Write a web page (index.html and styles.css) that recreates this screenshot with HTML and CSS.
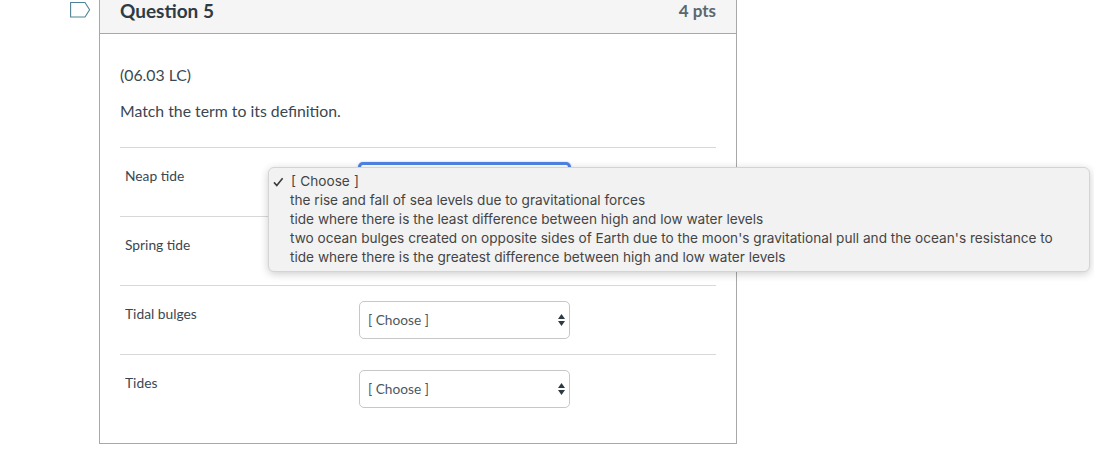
FILE: index.html
```html
<!DOCTYPE html>
<html lang="en">
<head>
<meta charset="utf-8">
<title>Question 5</title>
<link rel="stylesheet" href="styles.css">
</head>
<body>
<main class="page">
  <svg class="flag" width="21" height="17" viewBox="0 0 21 17" aria-hidden="true">
    <path d="M.6 1.5H15L19.6 8.8L15 16H.6Z" fill="none" stroke="#4f8299" stroke-width="1.1"/>
  </svg>
  <section class="card">
    <header class="card-head">
      <h2 class="title">Question 5</h2>
      <span class="pts">4 pts</span>
    </header>
    <div class="card-body">
      <p class="code">(06.03 LC)</p>
      <p class="prompt">Match the term to its definition.</p>
      <div class="rows">
        <div class="row">
          <span class="term">Neap tide</span>
          <div class="select focused"></div>
        </div>
        <div class="row">
          <span class="term">Spring tide</span>
          <div class="select"></div>
        </div>
        <div class="row">
          <span class="term">Tidal bulges</span>
          <div class="select"><span>[ Choose ]</span>
            <svg class="caret" width="7" height="14" viewBox="0 0 7 14" aria-hidden="true"><path d="M3.5 1L7 6H0ZM3.5 13L0 8H7Z" fill="#2d3b45"/></svg>
          </div>
        </div>
        <div class="row">
          <span class="term">Tides</span>
          <div class="select"><span>[ Choose ]</span>
            <svg class="caret" width="7" height="14" viewBox="0 0 7 14" aria-hidden="true"><path d="M3.5 1L7 6H0ZM3.5 13L0 8H7Z" fill="#2d3b45"/></svg>
          </div>
        </div>
      </div>
    </div>
  </section>
</main>
<ul class="menu">
  <li class="opt first">
    <svg class="check" width="11" height="10" viewBox="0 0 11 10" aria-hidden="true"><path d="M1 5.4L3.8 8.6L9.6 1.2" fill="none" stroke="#3c3c3c" stroke-width="1.6"/></svg>
    [ Choose ]
  </li>
  <li class="opt">the rise and fall of sea levels due to gravitational forces</li>
  <li class="opt">tide where there is the least difference between high and low water levels</li>
  <li class="opt">two ocean bulges created on opposite sides of Earth due to the moon's gravitational pull and the ocean's resistance to</li>
  <li class="opt">tide where there is the greatest difference between high and low water levels</li>
</ul>
</body>
</html>
```
FILE: styles.css
```css
html, body {
  margin: 0;
  padding: 0;
  height: 100%;
  overflow: hidden;
  background: #fff;
}
body {
  font-family: Lato, "Liberation Sans", sans-serif;
  color: #3a4750;
}
.page {
  display: flex;
  align-items: flex-start;
  padding-left: 70px;
}
.flag {
  flex: none;
  margin-top: 1px;
  margin-right: 8px;
}
.card {
  width: 636px;
  height: 443px;
  border: 1px solid #a8a8a8;
  border-top: 0;
  display: flex;
  flex-direction: column;
}
.card-head {
  height: 34px;
  box-sizing: border-box;
  padding: 0 20px 11px;
  display: flex;
  justify-content: space-between;
  align-items: center;
  background: #f5f5f5;
  border-bottom: 1px solid #a8a8a8;
}
.title {
  margin: 0;
  font-size: 19px;
  font-weight: 700;
  line-height: 22px;
  color: #2d3b45;
}
.pts {
  font-size: 17px;
  font-weight: 700;
  color: #5b6770;
  line-height: 22px;
}
.card-body {
  padding: 0 20px;
}
.code {
  margin: 30px 0 0;
  font-size: 15.8px;
  line-height: 22px;
}
.prompt {
  margin: 14px 0 0;
  font-size: 15.8px;
  line-height: 22px;
}
.rows {
  margin-top: 25px;
}
.row {
  height: 69px;
  box-sizing: border-box;
  border-top: 1px solid #d8d8d8;
  display: flex;
  align-items: flex-start;
}
.term {
  width: 239px;
  padding-left: 5px;
  box-sizing: border-box;
  margin-top: 18px;
  font-size: 13.8px;
  line-height: 19px;
}
.select {
  position: relative;
  width: 211px;
  height: 38px;
  margin-top: 15px;
  box-sizing: border-box;
  border: 1px solid #c7c7c7;
  border-radius: 5px;
  background: #fff;
  padding: 0 0 2px 8px;
  display: flex;
  align-items: center;
  font-size: 13.7px;
  color: #4b5860;
}
.select.focused {
  border: 3px solid #4f82e2;
  margin-top: 14px;
  margin-left: -1px;
  width: 213px;
  height: 40px;
  box-shadow: 0 0 2px rgba(79, 130, 226, 0.5);
}
.caret {
  position: absolute;
  right: 4px;
  top: 11px;
}
.menu {
  position: absolute;
  left: 268px;
  top: 167px;
  width: 822px;
  height: 105px;
  box-sizing: border-box;
  margin: 0;
  padding: 4px 0 0 21px;
  list-style: none;
  background: #f2f2f2;
  border: 1px solid #d4d4d4;
  border-radius: 6px;
  box-shadow: 0 2px 8px rgba(0, 0, 0, 0.2);
  font-family: Inter, "Liberation Sans", sans-serif;
  font-size: 13.64px;
  line-height: 19px;
  color: #444;
}
.opt {
  position: relative;
  white-space: nowrap;
}
.first {
  word-spacing: 0.5px;
  padding-left: 1px;
}
.check {
  position: absolute;
  left: -17px;
  top: 5px;
}
```
